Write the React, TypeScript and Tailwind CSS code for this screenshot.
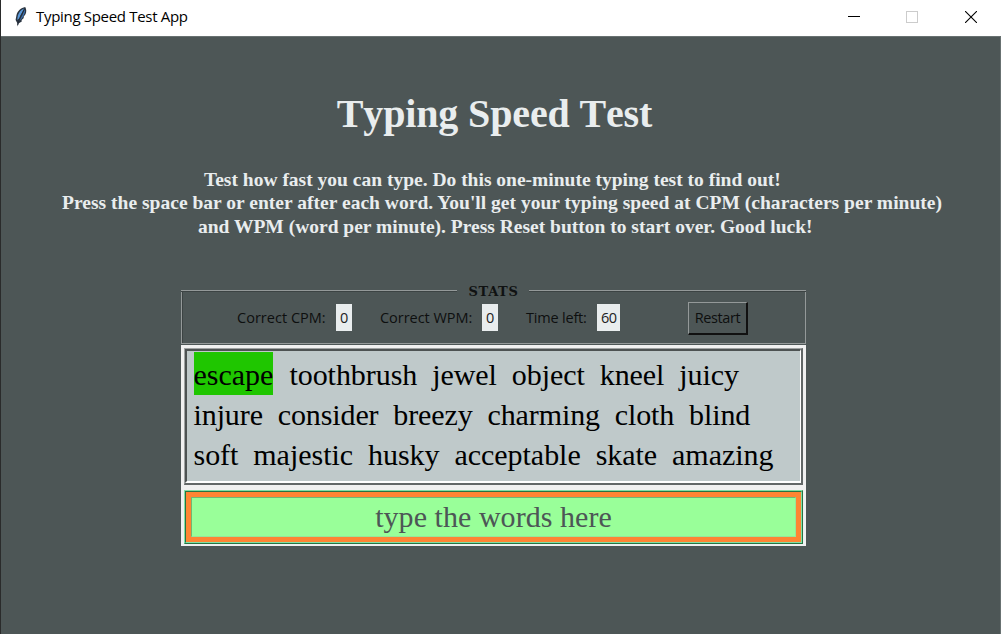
import React from "react";

const words = [
  ["toothbrush", "jewel", "object", "kneel", "juicy"],
  ["injure", "consider", "breezy", "charming", "cloth", "blind"],
  ["soft", "majestic", "husky", "acceptable", "skate", "amazing"],
];

function Feather() {
  return (
    <svg width="14" height="20" viewBox="0 0 14 20" className="block">
      <path d="M11.2 0 C7 .7 3.4 4 2.4 8.5 L1.6 13 L3.2 16 L3.6 19.5 L4.8 16.3 L7.8 14.5 L7.6 13 L9.8 11 L9.6 9.8 L11.5 7.2 C12.6 4.8 12.5 2.3 11.2 0Z" fill="#2b3541" />
      <path d="M10.2 1.5 C7 2.6 4.4 6 3.7 9.5 L3.2 13 L5.3 11.2 C7 8 8.2 5 10.2 1.5Z" fill="#5b9adb" />
      <path d="M11 2 L8.4 8.2 L5.2 14 L8.2 11 C10.4 7.5 11.4 5 11 2Z" fill="#3c73b5" />
      <path d="M10.5 2 L6.5 9 L3.5 18" fill="none" stroke="#1d2733" strokeWidth=".7" />
    </svg>
  );
}

function TitleBar() {
  return (
    <header className="flex h-9 items-center bg-white pb-[3px] pl-[13px]">
      <Feather />
      <span className="mt-[-2px] ml-[8px] font-['Open_Sans',sans-serif] text-[15px] leading-5 tracking-[-0.31px] whitespace-pre text-black">Typing Speed Test App</span>
      <div className="ml-auto flex items-center pt-[1px] pr-[24px]">
        <svg width="12" height="12" className="block" shapeRendering="crispEdges"><path d="M0 5h12v1H0z" fill="#000" /></svg>
        <svg width="12" height="12" className="ml-[46px] block" shapeRendering="crispEdges"><path d="M.5 .5h11v11H.5z" fill="none" stroke="#ccc" /></svg>
        <svg width="12" height="12" className="ml-[47px] block"><path d="M0 0L12 12M12 0L0 12" stroke="#000" strokeWidth="1.1" /></svg>
      </div>
    </header>
  );
}

function Value({ children }: { children: React.ReactNode }) {
  return <span className="flex h-[27px] items-center bg-[#e9edee] px-[4px] tracking-[-0.6px] text-[#222]">{children}</span>;
}

function Stats() {
  return (
    <section className="h-[62px]">
      <div className="flex h-4 items-center">
        <div className="mt-[-1px] h-[2px] w-[276px] border-t border-b border-t-[#949999] border-b-[#3c4343]" />
        <h2 className="mt-[1px] w-[72px] pl-[1px] text-center font-['DejaVu_Serif',serif] text-[13px] leading-4 font-bold tracking-[0.6px] text-[#101212]">STATS</h2>
        <div className="mt-[-1px] h-[2px] flex-1 border-t border-b border-t-[#949999] border-b-[#3c4343]" />
      </div>
      <div className="mt-[-9px] flex h-[54px] border border-t-0 border-[#949999] pt-[14px] pl-[55px] font-['Open_Sans',sans-serif] text-[14.5px] leading-5 whitespace-pre text-[#0d0f0f] shadow-[inset_1px_0_0_#3c4343]">
        <div className="flex h-[27px] w-[143px] items-center"><span className="w-[99px] tracking-[0.02px]">Correct CPM:</span><Value>0</Value></div>
        <div className="flex h-[27px] w-[146px] items-center"><span className="w-[102px] tracking-[-0.03px]">Correct WPM:</span><Value>0</Value></div>
        <div className="flex h-[27px] w-[162px] items-center"><span className="w-[71px] tracking-[-0.2px]">Time left:</span><Value>60</Value></div>
        <button className="mt-[-2px] h-[33px] w-[60px] border-t border-r-2 border-b-2 border-l border-t-[#949999] border-r-[#111] border-b-[#111] border-l-[#949999] text-center tracking-[-0.4px]">Restart</button>
      </div>
    </section>
  );
}

export default function App() {
  return (
    <main className="h-[634px] w-[1001px] overflow-hidden border-l border-[#2a2b2b] bg-[#4d5656]">
      <TitleBar />
      <div className="h-[598px] border-t border-r border-[#687171] pt-[50px]">
        <h1 className="h-[54px] pr-[12px] text-center font-['Liberation_Serif',serif] text-[40px] leading-[54px] font-bold tracking-[-0.14px] text-[#e9edee] [font-kerning:none]">Typing Speed Test</h1>
        <div className="mt-[27px] flex h-[72px] flex-col font-['Liberation_Serif',serif] text-[19.5px] leading-6 font-bold whitespace-pre text-[#e9edee]">
          <p className="pl-[203px]">Test how fast you can type. Do this one-minute typing test to find out!</p>
          <p className="mt-[-1px] pl-[61px] tracking-[0.02px]">Press the space bar or enter after each word. You'll get your typing speed at CPM (characters per minute)</p>
          <p className="pl-[197px]">and WPM (word per minute). Press Reset button to start over. Good luck!</p>
        </div>
        <div className="mt-[43px] ml-[180px] w-[625px]">
          <Stats />
          <div className="h-[201px] bg-[#f0f0f0] p-[3px] pb-[2px] font-['Liberation_Serif',serif] text-[30px]">
            <div className="h-[137px] border-t border-r-2 border-b-2 border-l border-t-[#a0a3a3] border-r-[#626767] border-b-[#626767] border-l-[#a0a3a3]">
              <div className="h-[134px] border-t-2 border-r border-b-2 border-l-2 border-t-[#4d5252] border-r-white border-b-white border-l-[#4d5252] bg-[#bfc9ca] pt-[1px] pl-[6.5px] leading-10 whitespace-pre text-black">
                <div className="flex h-[43px] leading-[46px]"><span className="h-[43px] bg-[#1fc600]">escape</span><p className="ml-[16px] tracking-[-0.05px]">{words[0].join("  ")}</p></div>
                <p className="h-10 tracking-[-0.1px]">{words[1].join("  ")}</p>
                <p className="h-10 tracking-[-0.03px]">{words[2].join("  ")}</p>
              </div>
            </div>
            <div className="mt-[5px] h-[54px] border border-t-[#81dfa4] border-r-[#267443] border-b-[#267443] border-l-[#81dfa4]">
              <div className="h-[52px] border border-t-[#267443] border-r-[#81dfa4] border-b-[#81dfa4] border-l-[#267443]">
                <div className="h-[50px] border-[5px] border-[#ff8533]">
                  <div className="h-10 border border-t-[#70b873] border-r-[#99e699] border-b-[#99e699] border-l-[#70b873] bg-[#99ff99] text-center leading-[37px] tracking-[0.05px] text-[#4d5656]">type the words here</div>
                </div>
              </div>
            </div>
          </div>
        </div>
      </div>
    </main>
  );
}
